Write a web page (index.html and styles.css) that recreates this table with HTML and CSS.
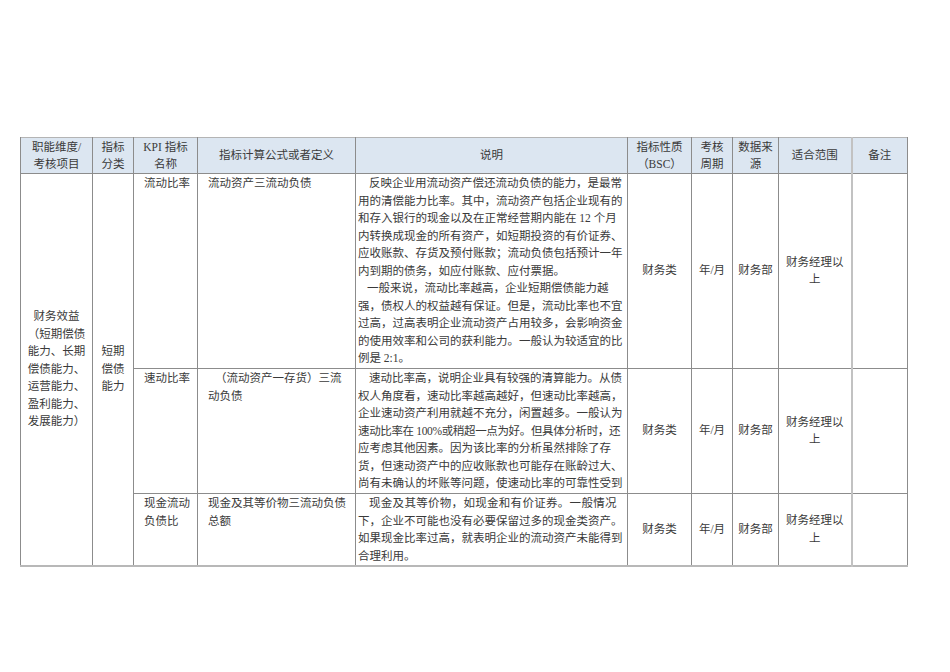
FILE: index.html
```html
<!DOCTYPE html>
<html lang="zh-CN">
<head>
<meta charset="utf-8">
<title>KPI 指标</title>
<link rel="stylesheet" href="styles.css">
</head>
<body>
<div class="page">
  <table class="kpi">
    <colgroup>
      <col class="c-dim">
      <col class="c-cat">
      <col class="c-name">
      <col class="c-formula">
      <col class="c-desc">
      <col class="c-nature">
      <col class="c-period">
      <col class="c-source">
      <col class="c-scope">
      <col class="c-note">
    </colgroup>
    <thead>
      <tr class="head">
        <th>职能维度/<br>考核项目</th>
        <th>指标<br>分类</th>
        <th>KPI 指标<br>名称</th>
        <th>指标计算公式或者定义</th>
        <th>说明</th>
        <th>指标性质<br>（BSC）</th>
        <th>考核<br>周期</th>
        <th>数据来<br>源</th>
        <th class="scope">适合范围</th>
        <th>备注</th>
      </tr>
    </thead>
    <tbody>
      <tr class="r1">
        <td rowspan="3" class="mid center">财务效益<br>（短期偿债<br>能力、长期<br>偿债能力、<br>运营能力、<br>盈利能力、<br>发展能力）</td>
        <td rowspan="3" class="mid center">短期<br>偿债<br>能力</td>
        <td class="name">流动比率</td>
        <td class="formula">流动资产三流动负债</td>
        <td class="desc">
          <div class="desc-box">
            <div class="ind">反映企业用流动资产偿还流动负债的能力，是最常</div>
            <div>用的清偿能力比率。其中，流动资产包括企业现有的</div>
            <div>和存入银行的现金以及在正常经营期内能在 12 个月</div>
            <div>内转换成现金的所有资产，如短期投资的有价证券、</div>
            <div>应收账款、存货及预付账款；流动负债包括预计一年</div>
            <div>内到期的债务，如应付账款、应付票据。</div>
            <div class="ind2">一般来说，流动比率越高，企业短期偿债能力越</div>
            <div>强，债权人的权益越有保证。但是，流动比率也不宜</div>
            <div>过高，过高表明企业流动资产占用较多，会影响资金</div>
            <div>的使用效率和公司的获利能力。一般认为较适宜的比</div>
            <div>例是 2:1。</div>
          </div>
        </td>
        <td class="mid center">财务类</td>
        <td class="mid center">年/月</td>
        <td class="mid center">财务部</td>
        <td class="mid center scope">财务经理以<br>上</td>
        <td></td>
      </tr>
      <tr class="r2">
        <td class="name">速动比率</td>
        <td class="formula"><span class="ind3">（流动资产一存货）三流</span><br>动负债</td>
        <td class="desc">
          <div class="desc-box">
            <div class="ind">速动比率高，说明企业具有较强的清算能力。从债</div>
            <div>权人角度看，速动比率越高越好，但速动比率越高，</div>
            <div>企业速动资产利用就越不充分，闲置越多。一般认为</div>
            <div class="tight">速动比率在 100%或稍超一点为好。但具体分析时，还</div>
            <div>应考虑其他因素。因为该比率的分析虽然排除了存</div>
            <div>货，但速动资产中的应收账款也可能存在账龄过大、</div>
            <div>尚有未确认的坏账等问题，使速动比率的可靠性受到</div>
          </div>
        </td>
        <td class="mid center">财务类</td>
        <td class="mid center">年/月</td>
        <td class="mid center">财务部</td>
        <td class="mid center scope">财务经理以<br>上</td>
        <td></td>
      </tr>
      <tr class="r3">
        <td class="name">现金流动<br>负债比</td>
        <td class="formula">现金及其等价物三流动负债<br>总额</td>
        <td class="desc">
          <div class="desc-box">
            <div class="ind wide">现金及其等价物，如现金和有价证券。一般情况</div>
            <div>下，企业不可能也没有必要保留过多的现金类资产。</div>
            <div>如果现金比率过高，就表明企业的流动资产未能得到</div>
            <div>合理利用。</div>
          </div>
        </td>
        <td class="mid center">财务类</td>
        <td class="mid center">年/月</td>
        <td class="mid center">财务部</td>
        <td class="mid center scope">财务经理以<br>上</td>
        <td></td>
      </tr>
    </tbody>
  </table>
</div>
</body>
</html>
```

FILE: styles.css
```css
html, body {
  margin: 0;
  padding: 0;
  background: #ffffff;
}

.page {
  padding: 137px 0 0 20px;
  font-family: "Liberation Serif", "Noto Sans CJK SC", serif;
  font-size: 11.5px;
  color: #3a3a3a;
}

.kpi {
  width: 887px;
  table-layout: fixed;
  border-collapse: collapse;
  border-top: 1px solid #b4b4b4;
  border-bottom: 2px solid #b8b8b8;
}

.c-dim { width: 72px; }
.c-cat { width: 41px; }
.c-name { width: 64px; }
.c-formula { width: 158px; }
.c-desc { width: 272px; }
.c-nature { width: 64px; }
.c-period { width: 41px; }
.c-source { width: 46px; }
.c-scope { width: 73px; }
.c-note { width: 56px; }

.kpi th,
.kpi td {
  border-left: 1px solid #8c8c8c;
  border-right: 1px solid #8c8c8c;
  border-bottom: 1px solid #8c8c8c;
  padding: 0;
  font-weight: normal;
}

.kpi .scope {
  border-right: 2px solid #c2c2c2;
}

.head th {
  height: 35px;
  background: #dce6f1;
  text-align: center;
  vertical-align: middle;
  line-height: 17px;
  padding: 0 3px;
}

.r1 td { height: 193px; }
.r2 td { height: 123px; }
.r3 td { height: 70px; }

.kpi td {
  vertical-align: top;
  line-height: 17.5px;
}

.kpi td.mid {
  vertical-align: middle;
}

.kpi td.center {
  text-align: center;
  padding: 0 4px;
}

.kpi td.name {
  padding: 1px 4px 0 10px;
  text-align: left;
}

.kpi td.formula {
  padding: 1px 4px 0 10px;
  text-align: left;
}

.ind3 {
  padding-left: 7px;
}

.kpi td.desc {
  padding: 1px 0 0 2px;
}

.desc-box {
  white-space: nowrap;
}

.ind {
  padding-left: 11px;
}

.ind2 {
  padding-left: 9px;
}

.tight {
  letter-spacing: -0.35px;
}

.wide {
  letter-spacing: 0.3px;
}
```
